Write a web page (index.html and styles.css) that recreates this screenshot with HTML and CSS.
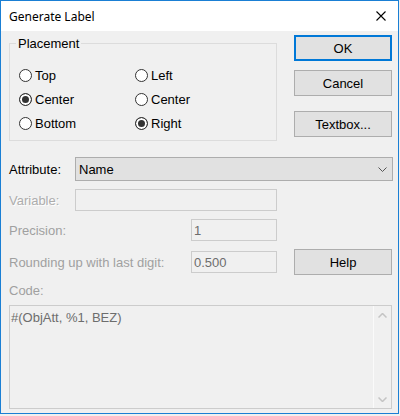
FILE: index.html
```html
<!DOCTYPE html>
<html lang="en">
<head>
  <meta charset="UTF-8">
  <title>Generate Label</title>
  <link rel="stylesheet" href="styles.css">
</head>
<body>
<div class="window">
  <!-- title bar -->
  <div class="titlebar">
    <span class="title">Generate Label</span>
    <span class="close">
      <svg width="10" height="10" viewBox="0 0 10 10"><path d="M0.5 0.5 L9.5 9.5 M9.5 0.5 L0.5 9.5" stroke="#000" stroke-width="1.1" fill="none"/></svg>
    </span>
  </div>

  <div class="client">
    <!-- placement group -->
    <fieldset class="group">
      <legend>Placement</legend>
      <div class="radio-grid">
        <label class="radio"><input type="radio" name="v"> Top</label>
        <label class="radio"><input type="radio" name="h"> Left</label>
        <label class="radio"><input type="radio" name="v" checked> Center</label>
        <label class="radio"><input type="radio" name="h"> Center</label>
        <label class="radio"><input type="radio" name="v"> Bottom</label>
        <label class="radio"><input type="radio" name="h" checked> Right</label>
      </div>
    </fieldset>

    <!-- dialog buttons -->
    <div class="buttons">
      <button class="btn default">OK</button>
      <button class="btn">Cancel</button>
      <button class="btn gap">Textbox...</button>
    </div>

    <label class="lbl row-attr">Attribute:</label>
    <div class="select row-attr">
      <span>Name</span>
      <svg width="9" height="5" viewBox="0 0 9 5"><path d="M0.5 0.5 L4.5 4.5 L8.5 0.5" stroke="#555" stroke-width="1" fill="none"/></svg>
    </div>

    <label class="lbl disabled etched row-var">Variable:</label>
    <div class="field row-var wide"></div>

    <label class="lbl disabled row-prec">Precision:</label>
    <div class="field row-prec narrow">1</div>

    <label class="lbl disabled row-round">Rounding up with last digit:</label>
    <div class="field row-round narrow">0.500</div>
    <button class="btn row-round help">Help</button>

    <label class="lbl disabled row-codelbl">Code:</label>
    <div class="code row-code">
      <div class="code-text">#(ObjAtt, %1, BEZ)</div>
      <div class="scrollbar">
        <svg width="9" height="5" viewBox="0 0 9 5"><path d="M0.5 4.5 L4.5 0.5 L8.5 4.5" stroke="#c4c4c4" stroke-width="1.5" fill="none"/></svg>
        <svg width="9" height="5" viewBox="0 0 9 5"><path d="M0.5 0.5 L4.5 4.5 L8.5 0.5" stroke="#c4c4c4" stroke-width="1.5" fill="none"/></svg>
      </div>
    </div>
  </div>
</div>
</body>
</html>
```

FILE: styles.css
```css
body {
  margin: 0;
  background: #f0f0f0;
  font-family: "Liberation Sans", Arial, sans-serif;
  font-size: 13px;
  color: #000;
}
.window {
  box-sizing: border-box;
  width: 399px;
  height: 414px;
  border: 1px solid #1a7fd4;
  background: #f0f0f0;
  display: flex;
  flex-direction: column;
}

/* title bar */
.titlebar {
  height: 30px;
  background: #fff;
  display: flex;
  align-items: center;
  justify-content: space-between;
  padding-left: 8px;
}
.title {
  font-family: "Noto Sans", sans-serif;
  font-size: 12px;
}
.close {
  width: 46px;
  height: 30px;
  display: flex;
  align-items: center;
  justify-content: center;
  margin-right: -6px;
}

/* dialog body: one grid for all controls */
.client {
  display: grid;
  grid-template-columns: 66px 116px 86px 17px 98px;
  grid-template-rows: 114px 24px 22px 22px 26px 14px 104px;
  row-gap: 8px;
  padding: 4px 0 0 8px;
}

.group {
  grid-column: 1 / 4;
  grid-row: 1;
  align-self: start;
  margin: 1px 0 0 0;
  padding: 12px 0 5px 9px;
  border: 1px solid #dcdcdc;
  min-width: 0;
}
.group legend {
  padding: 0 2px;
  margin-left: -3px;
  line-height: 15px;
}
.radio-grid {
  display: grid;
  grid-template-columns: 116px 1fr;
  grid-auto-rows: 24px;
}
.radio {
  display: flex;
  align-items: center;
  gap: 3px;
}
.radio input {
  appearance: none;
  -webkit-appearance: none;
  margin: 0;
  width: 13px;
  height: 13px;
  border: 1px solid #333;
  border-radius: 50%;
  background: #fff;
}
.radio input:checked {
  background: #333;
  box-shadow: inset 0 0 0 2px #fff;
}

.buttons {
  grid-column: 5;
  grid-row: 1;
  display: flex;
  flex-direction: column;
  gap: 9px;
}
.btn {
  box-sizing: border-box;
  width: 98px;
  height: 26px;
  margin: 0;
  padding: 0;
  background: #e1e1e1;
  border: 1px solid #adadad;
  font-family: inherit;
  font-size: 13px;
  color: #000;
}
.btn.default {
  border: 2px solid #0078d7;
}
.btn.gap {
  margin-top: 6px;
}

.lbl {
  align-self: center;
  white-space: nowrap;
}
.disabled {
  color: #a0a0a0;
}
.etched {
  color: #adadad;
  text-shadow: 1px 1px 0 #fff;
}

.row-attr { grid-row: 2; }
.row-var { grid-row: 3; }
.row-prec { grid-row: 4; }
.row-round { grid-row: 5; }
.row-codelbl { grid-row: 6; grid-column: 1 / 6; }
.row-code { grid-row: 7; grid-column: 1 / 6; }

.lbl.row-attr, .lbl.row-var { grid-column: 1; }
.lbl.row-prec, .lbl.row-round { grid-column: 1 / 3; }

.select {
  grid-column: 2 / 6;
  margin-right: -1px;
  box-sizing: border-box;
  background: #e1e1e1;
  border: 1px solid #adadad;
  display: flex;
  align-items: center;
  justify-content: space-between;
  padding: 0 5px 0 3px;
}

.field {
  box-sizing: border-box;
  height: 22px;
  border: 1px solid #cccccc;
  background: #f0f0f0;
  color: #6d6d6d;
  padding: 0 2px;
  display: flex;
  align-items: center;
  align-self: center;
}
.field.wide { grid-column: 2 / 4; }
.field.narrow { grid-column: 3; }
.help { grid-column: 5; }

.code {
  box-sizing: border-box;
  border: 1px solid #cccccc;
  display: flex;
}
.code-text {
  flex: 1;
  color: #6d6d6d;
  padding: 4px 1px;
}
.scrollbar {
  width: 17px;
  border-left: 1px solid #fafafa;
  display: flex;
  flex-direction: column;
  justify-content: space-between;
  align-items: center;
  padding: 7px 0 6px;
}
```
